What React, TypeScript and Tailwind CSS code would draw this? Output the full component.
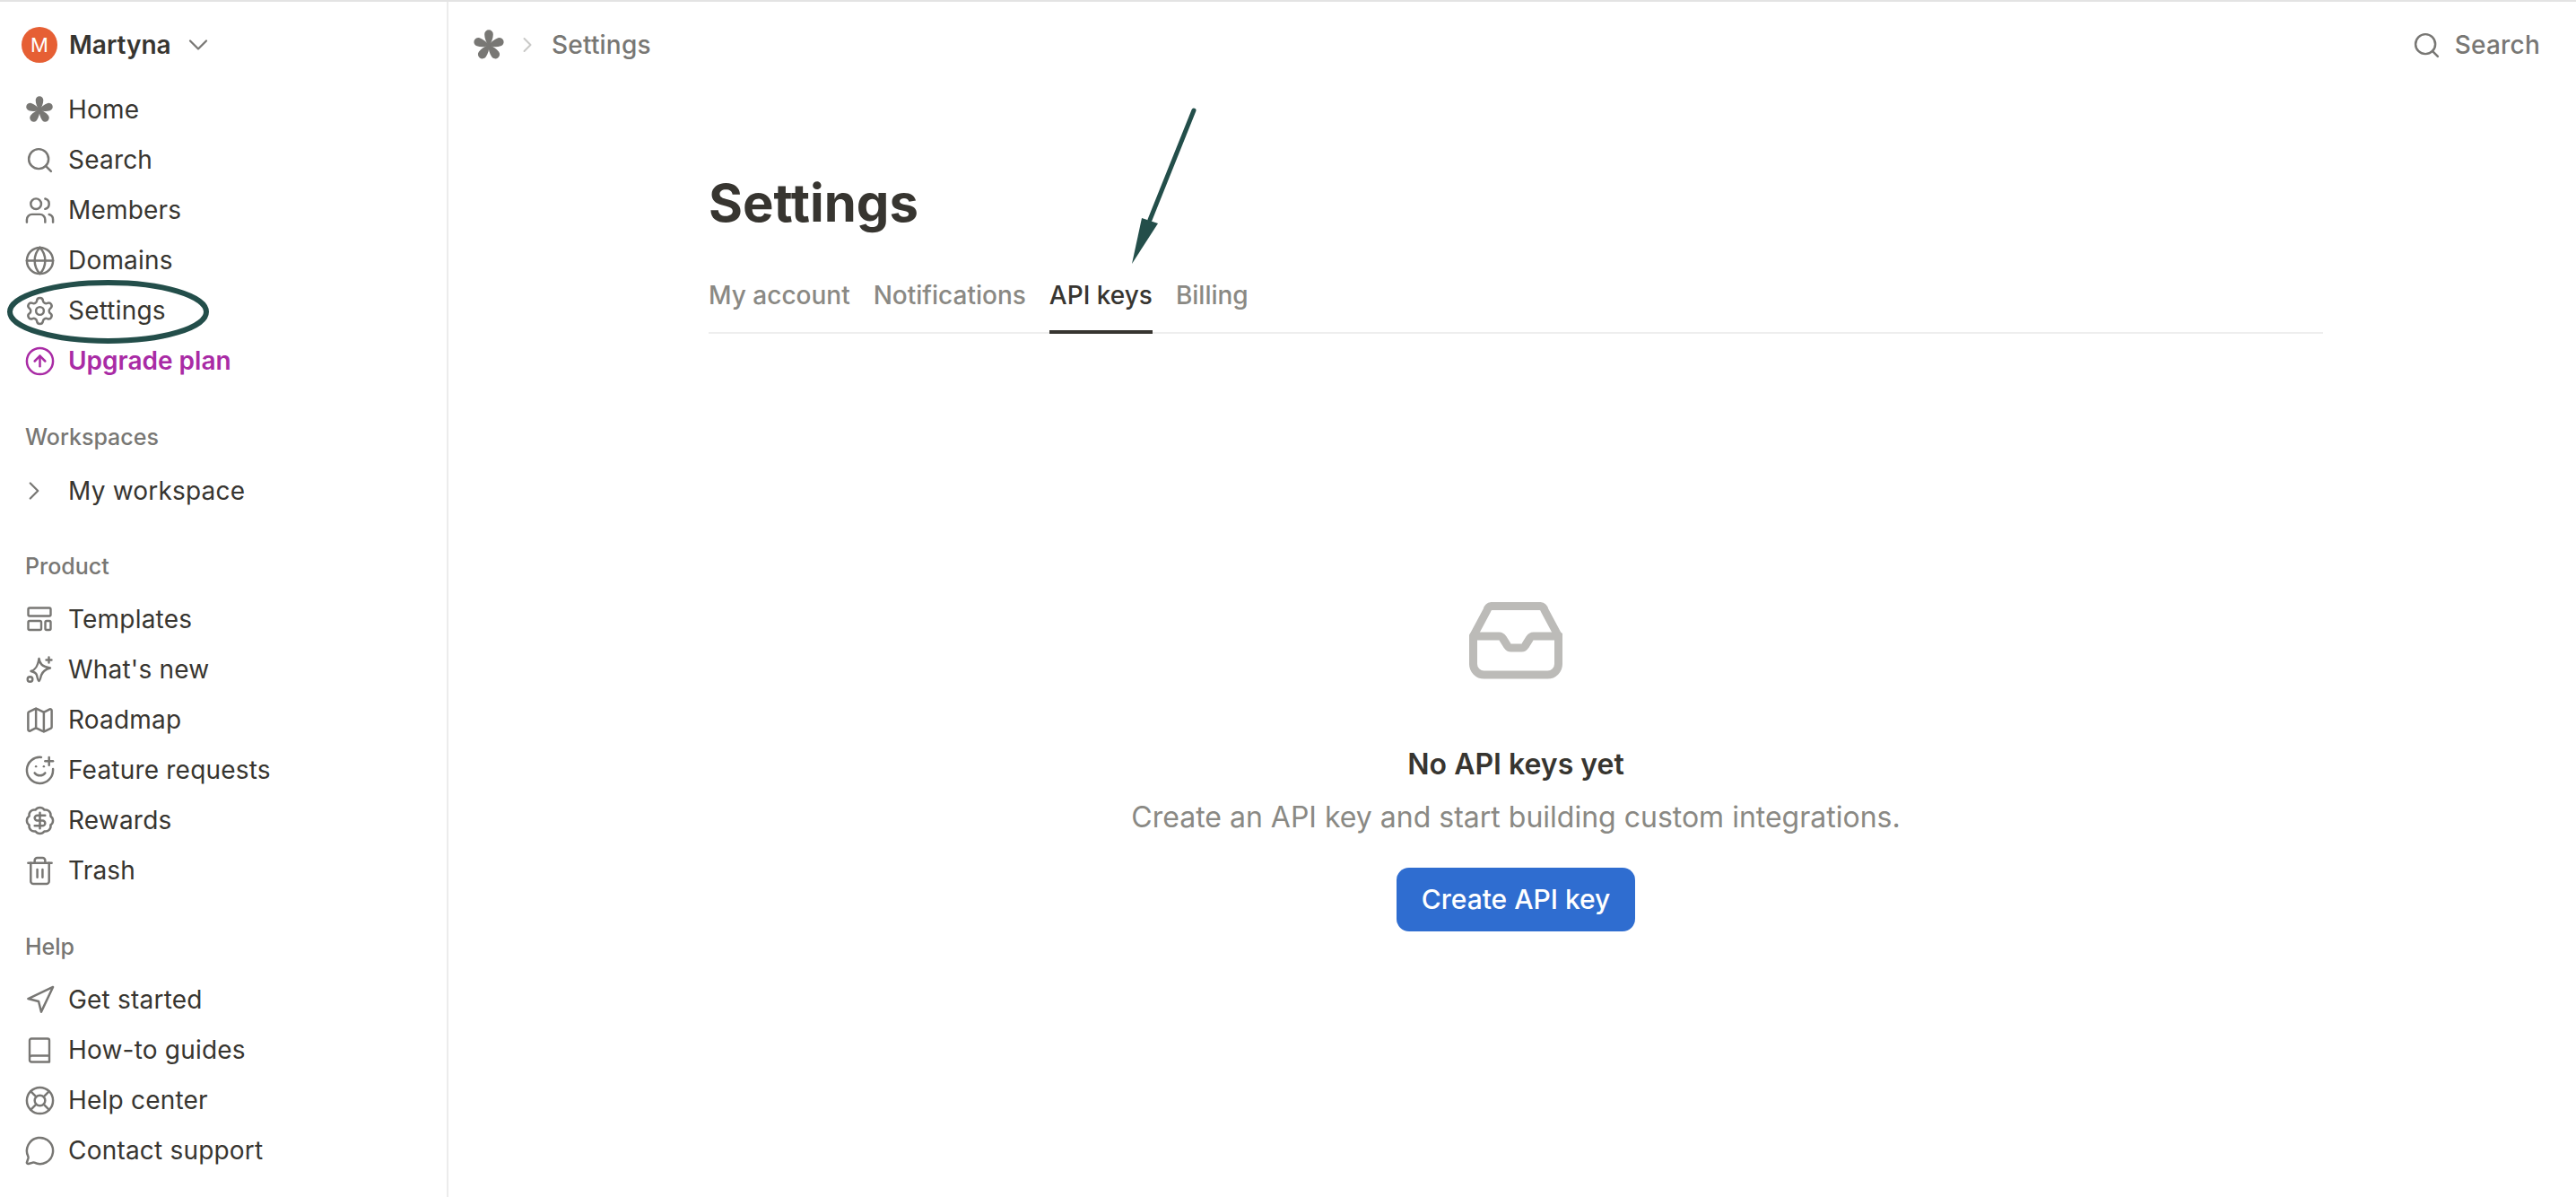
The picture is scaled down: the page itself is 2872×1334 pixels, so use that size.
import {
  BadgeDollarSign,
  ChevronDown,
  ChevronRight,
  CircleArrowUp,
  Globe,
  LifeBuoy,
  Map,
  MessageCircle,
  Navigation,
  Search,
  Settings,
  SmilePlus,
  Trash2,
  Users,
} from 'lucide-react'
import type { ReactNode } from 'react'

function Logo({ className }: { className: string }) {
  return (
    <svg viewBox="0 0 32 32" className={className} fill="currentColor">
      {[0, 72, 144, 216, 288].map((deg) => (
        <path
          key={deg}
          d="M16 18C13.500 13.500 11.700 9.500 11.700 5.500a4.300 4.300 0 0 1 8.600 0C20.300 9.500 18.500 13.500 16 18z"
          transform={`rotate(${deg} 16 16.500)`}
        />
      ))}
    </svg>
  )
}

function TemplatesIcon() {
  return (
    <svg viewBox="0 0 32 32" className="h-8 w-8" fill="none" stroke="currentColor" strokeWidth="2.400">
      <rect x="3.500" y="3.500" width="25" height="9" rx="1.500" />
      <rect x="3.500" y="18" width="14.500" height="10" rx="1.500" />
      <rect x="22.500" y="18" width="6" height="10" rx="1.500" />
    </svg>
  )
}

function SparkIcon() {
  return (
    <svg viewBox="0 0 32 32" className="h-8 w-8" fill="none" stroke="currentColor" strokeWidth="2.400" strokeLinecap="round" strokeLinejoin="round">
      <path d="M15.500 4c1 6 3 8.500 12.500 10.500-6 1.500-8.500 4-10 8-1 4-1.500 6-2.500 6.500-1 0-1.500-2.500-2.500-6.500-.5-2-2-3.500-6.500-4.500 5-1.500 7.500-5 9-14z" />
      <path d="M26.500 2.500v6M23.500 5.500h6" />
      <circle cx="5.500" cy="27" r="2.800" />
    </svg>
  )
}

function BookIcon() {
  return (
    <svg viewBox="0 0 32 32" className="h-8 w-8" fill="none" stroke="currentColor" strokeWidth="2.400" strokeLinejoin="round">
      <path d="M5 26.500V5.500A2 2 0 0 1 7 3.500h18a2 2 0 0 1 2 2V29.500H7a2 2 0 0 1-2-2V25a2.500 2.500 0 0 1 2.500-2.500H27" />
    </svg>
  )
}

function NavRow({ icon, label }: { icon: ReactNode; label: string }) {
  return (
    <div className="flex h-14 items-center gap-4 text-[28px] tracking-[0.2px] text-[#373530]">
      <span className="flex h-8 w-8 shrink-0 items-center justify-center text-[#787774]">{icon}</span>
      <span>{label}</span>
    </div>
  )
}

function SectionLabel({ children, className }: { children: string; className: string }) {
  return <div className={`flex h-[30px] items-center text-[25px] font-medium text-[#787774] ${className}`}>{children}</div>
}

const iconProps = { size: 35, strokeWidth: 1.700, className: 'shrink-0' }

const productRows = [
  { label: 'Templates', icon: <TemplatesIcon /> },
  { label: "What's new", icon: <SparkIcon /> },
  { label: 'Roadmap', icon: <Map {...iconProps} /> },
  { label: 'Feature requests', icon: <SmilePlus {...iconProps} /> },
  { label: 'Rewards', icon: <BadgeDollarSign {...iconProps} /> },
  { label: 'Trash', icon: <Trash2 {...iconProps} /> },
]

const helpRows = [
  { label: 'Get started', icon: <Navigation {...iconProps} /> },
  { label: 'How-to guides', icon: <BookIcon /> },
  { label: 'Help center', icon: <LifeBuoy {...iconProps} /> },
  { label: 'Contact support', icon: <MessageCircle {...iconProps} /> },
]

export default function App() {
  return (
    <div className="relative flex h-screen overflow-hidden border-t-2 border-[#e3e3e3] bg-white font-['Inter',sans-serif]">
      {/* Sidebar */}
      <aside className="w-[500px] shrink-0 border-r-2 border-[#ececec] pl-7 pt-7">
        <div className="flex h-10 items-center text-[28px] font-semibold text-[#373530]">
          <span className="-ml-1 flex h-10 w-10 items-center justify-center rounded-full bg-[#e65f34] text-[22px] font-normal text-white">M</span>
          <span className="ml-[13px]">Martyna</span>
          <ChevronDown size={36} strokeWidth={1.500} className="ml-3 shrink-0 text-[#787774]" />
        </div>

        <nav className="mt-6">
          <NavRow icon={<Logo className="h-8 w-8" />} label="Home" />
          <NavRow icon={<Search size={33} strokeWidth={1.800} className="shrink-0" />} label="Search" />
          <NavRow icon={<Users {...iconProps} />} label="Members" />
          <NavRow icon={<Globe {...iconProps} />} label="Domains" />
          <NavRow icon={<Settings {...iconProps} />} label="Settings" />
          <div className="flex h-14 items-center gap-4 text-[28px] font-semibold text-[#a92ba5]">
            <span className="flex h-8 w-8 items-center justify-center">
              <CircleArrowUp {...iconProps} />
            </span>
            <span>Upgrade plan</span>
          </div>
        </nav>

        <SectionLabel className="mt-[43px]">Workspaces</SectionLabel>
        <div className="mt-4">
          <NavRow icon={<ChevronRight size={34} strokeWidth={1.600} className="shrink-0 -translate-x-[6px]" />} label="My workspace" />
        </div>

        <SectionLabel className="mt-[42px]">Product</SectionLabel>
        <div className="mt-[15px]">
          {productRows.map((row) => (
            <NavRow key={row.label} icon={row.icon} label={row.label} />
          ))}
        </div>

        <SectionLabel className="mt-[43px]">Help</SectionLabel>
        <div className="mt-[15px]">
          {helpRows.map((row) => (
            <NavRow key={row.label} icon={row.icon} label={row.label} />
          ))}
        </div>
      </aside>

      {/* Main */}
      <main className="flex-1">
        <header className="flex h-24 items-center pl-[27px] pr-[40px] text-[28px] font-medium tracking-[0.2px] text-[#787774]">
          <Logo className="h-9 w-9 shrink-0" />
          <ChevronRight size={28} strokeWidth={1.700} className="ml-[11px] shrink-0 text-[#c9c9c7]" />
          <span className="ml-[13px]">Settings</span>
          <div className="ml-auto flex items-center gap-[15px]">
            <Search size={33} strokeWidth={1.800} className="shrink-0" />
            <span>Search</span>
          </div>
        </header>

        <div className="ml-[290px] w-[1800px]">
          <h1 className="mt-[90px] text-[58px] font-bold leading-[76px] text-[#373530]">Settings</h1>
          <div className="mt-[44px] flex h-[64px] gap-[26px] border-b-2 border-[#eeeeee] text-[28px] font-medium text-[#8a8984]">
            <div>My account</div>
            <div>Notifications</div>
            <div className="h-[64px] border-b-4 border-[#373530] text-[#373530]">API keys</div>
            <div>Billing</div>
          </div>

          <div className="mt-[299px] flex flex-col items-center">
            <svg viewBox="0 0 104 86" className="h-[86px] w-[104px]" fill="none" stroke="#bcbbb8" strokeWidth="9" strokeLinejoin="round" strokeLinecap="round">
              <path d="M4.500 38 20 9a6 6 0 0 1 5-4.500h54a6 6 0 0 1 5 4.500l15.500 29v31a12 12 0 0 1-12 12H16.500a12 12 0 0 1-12-12z" />
              <path d="M4.500 38h29c2 0 3 1 4 2.500l5 8c1 1.500 2 2.500 4 2.500h12c2 0 3-1 4-2.500l5-8c1-1.500 2-2.500 4-2.500h29" />
            </svg>
            <div className="mt-[77px] text-[32px] font-semibold leading-9 text-[#373530]">No API keys yet</div>
            <div className="mt-[23px] text-[32px] leading-9 text-[#8a8984]">Create an API key and start building custom integrations.</div>
            <button className="mt-[38px] h-[71px] w-[266px] rounded-[14px] bg-[#2f6dd0] text-[30px] font-medium text-white">Create API key</button>
          </div>
        </div>
      </main>

      {/* Annotations drawn over the screenshot */}
      <svg className="pointer-events-none absolute -top-[2px] left-0" width="2872" height="1334" fill="none">
        <ellipse cx="120.500" cy="347.500" rx="109.500" ry="32.500" stroke="#234e4a" strokeWidth="6" />
        <path d="M1331 123 1282 245" stroke="#234e4a" strokeWidth="5" strokeLinecap="round" />
        <path d="M1262 294 1273 243 1291 249z" fill="#234e4a" />
      </svg>
    </div>
  )
}
